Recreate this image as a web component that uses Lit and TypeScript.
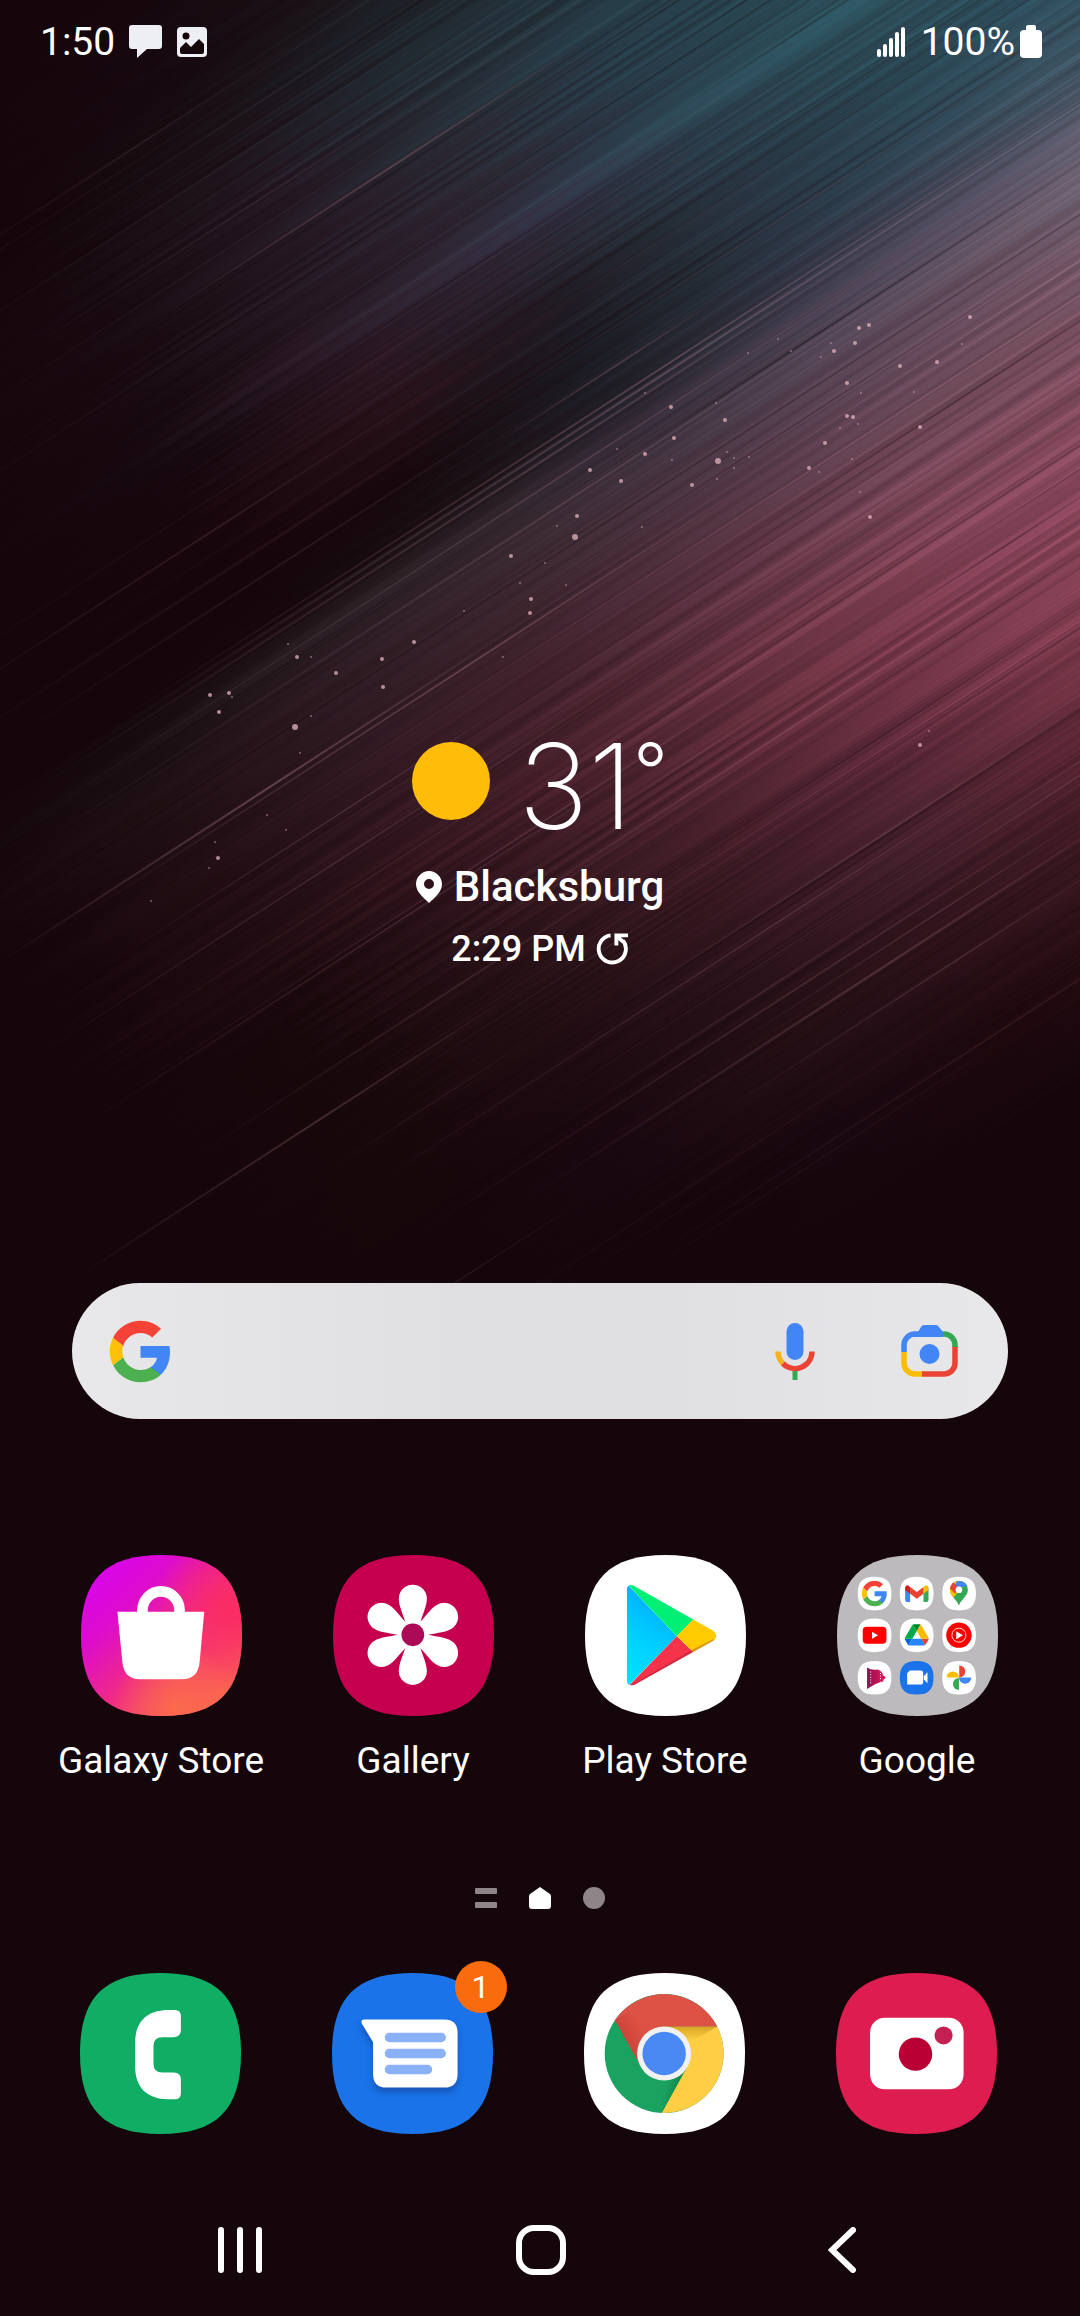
import { LitElement, html, svg, css } from "lit";
import { customElement, property } from "lit/decorators.js";

/* ---------- Wallpaper: slanted light streaks built from a colour field ---------- */

type Rgb = [number, number, number];

const NIGHT: Rgb = [21, 6, 11];
const ALONG = [-500, -300, -100, 100, 300, 500, 700, 850];
const FIELD: Array<[number, string[]]> = [
  [0, ["15060b", "15060b", "15060b", "15060b", "15060b", "15060b", "15060b", "15060b"]],
  [150, ["15060b", "15060b", "15060b", "170910", "1a1216", "1a1216", "1a1216", "1a1216"]],
  [220, ["15060b", "15060b", "15060b", "191015", "1e2329", "1e262c", "1e262c", "1e262c"]],
  [300, ["15060b", "15060b", "180a10", "251822", "26323c", "27404a", "27404a", "27404a"]],
  [400, ["15060b", "15060b", "190a11", "261822", "2c2935", "28414d", "294c57", "294c57"]],
  [480, ["15060b", "15060b", "170910", "2a1a25", "312b3c", "2c404e", "2c4e5a", "2c4e5a"]],
  [550, ["15060b", "15060b", "18070c", "2b131c", "211c24", "293844", "2c4a57", "2f5262"]],
  [620, ["15060b", "15060b", "15060b", "17080d", "1b1a21", "28333f", "304858", "3a5564"]],
  [665, ["15060b", "15060b", "15070c", "1b1014", "22222a", "363848", "484c5c", "4e5c6c"]],
  [700, ["15060b", "190d11", "281c21", "30242a", "332a36", "453f50", "585264", "656272"]],
  [750, ["16070c", "1e1014", "2c1a21", "38262e", "44343f", "564556", "675464", "706474"]],
  [850, ["15060b", "220e14", "341a24", "44242f", "5c3646", "704a5a", "7c5464", "805c70"]],
  [950, ["15060b", "1f0b11", "35161f", "4e2430", "6e3647", "83465a", "8a4c60", "8a4c60"]],
  [1020, ["15060b", "17080c", "2d131b", "4a222d", "6e3342", "844056", "904a60", "904a60"]],
  [1120, ["15060b", "17080c", "241015", "391922", "562637", "78384a", "844052", "844052"]],
  [1220, ["15060b", "16070b", "1c0a10", "2c131b", "44202c", "5c2635", "602838", "602838"]],
  [1300, ["15060b", "15060b", "190810", "240f15", "2f131b", "401a25", "401a25", "401a25"]],
  [1400, ["15060b", "15060b", "15060b", "190810", "20090f", "290e15", "290e15", "290e15"]],
  [1500, ["15060b", "15060b", "15060b", "15060b", "15060b", "17070c", "17070c", "17070c"]],
];

const rgb = (hex: string): Rgb => [
  parseInt(hex.slice(0, 2), 16),
  parseInt(hex.slice(2, 4), 16),
  parseInt(hex.slice(4, 6), 16),
];
const mix = (a: Rgb, b: Rgb, t: number): Rgb => [
  a[0] + (b[0] - a[0]) * t,
  a[1] + (b[1] - a[1]) * t,
  a[2] + (b[2] - a[2]) * t,
];
const paint = (c: Rgb) =>
  "rgb(" + c.map((n) => Math.max(0, Math.min(255, Math.round(n)))).join(",") + ")";

let seed = 20227;
const random = () => {
  seed = (seed * 1103515245 + 12345) % 2147483648;
  return seed / 2147483648;
};

function fieldRow(v: number): Rgb[] {
  let i = 0;
  while (i < FIELD.length - 2 && FIELD[i + 1][0] < v) i++;
  const [v0, a] = FIELD[i];
  const [v1, b] = FIELD[i + 1];
  const t = Math.max(0, Math.min(1, (v - v0) / (v1 - v0)));
  return a.map((hex, k) => mix(rgb(hex), rgb(b[k]), t));
}

function buildStrips() {
  const strips = [];
  let v = 60;
  let slow = 0;
  let id = 0;
  while (v < 1500) {
    const h = 1 + Math.floor(random() * random() * 6);
    slow = slow * 0.75 + (random() - 0.5) * 0.12;
    const gain = 0.96 + slow + (random() - 0.5) * 0.22;
    const shift = (random() - 0.5) * 90;
    const row = fieldRow(v + (random() - 0.5) * 16);
    const name = "strip" + id++;
    strips.push(svg`
      <linearGradient id=${name} gradientUnits="userSpaceOnUse" x1="-500" x2="850" y1="0" y2="0"
        gradientTransform=${`translate(${Math.round(shift)} 0)`}>
        ${row.map(
          (c, k) => svg`<stop offset=${(ALONG[k] + 500) / 1350} stop-color=${paint(mix(NIGHT, c, gain))}></stop>`,
        )}
      </linearGradient>
      <rect x="-1400" y=${v} width="2700" height=${h + 1} fill=${`url(#${name})`}></rect>`);
    v += h;
  }
  return strips;
}

function buildRays() {
  const rays = [];
  for (let i = 0; i < 170; i++) {
    const v = 180 + random() * 1240;
    const centre = -200 + random() * 950 - Math.max(0, v - 1000) * 0.5 + Math.max(0, 640 - v) * 0.3;
    const length = 250 + random() * 700;
    const dark = random() < 0.45;
    const strength = v < 640 ? 0.06 : 0.16;
    rays.push(svg`<rect x=${Math.round(centre - length / 2)} y=${v.toFixed(1)}
      width=${Math.round(length)} height=${(0.7 + random() * 1.6).toFixed(1)}
      fill=${dark ? "url(#rayDark)" : v < 600 ? "url(#rayCool)" : "url(#rayWarm)"}
      opacity=${(0.04 + random() * (dark ? 0.4 : strength)).toFixed(2)}></rect>`);
  }
  return rays;
}

/* Long single rays that cross most of the sky: [v, from, to, opacity] */
const LONG_RAYS: Array<[number, number, number, number]> = [
  [196, -200, 240, 0.1], [352, -60, 480, 0.24], [560, -480, 200, 0.12], [668, -300, 900, 0.26],
  [674, -260, 860, 0.22], [681, -400, 700, 0.2], [704, -450, 800, 0.18], [728, -420, 700, 0.14],
  [806, -520, 60, 0.3], [812, -420, 400, 0.26], [905, -560, 100, 0.14], [1040, -200, 640, 0.14],
  [1075, -480, 120, 0.12], [1112, -640, -100, 0.22], [1180, -100, 620, 0.18], [1196, -350, 560, 0.15],
  [1262, -300, 500, 0.12],
];

/* Dust specks: x, y, radius */
const SPECKS: Array<[number, number, number]> = [
  [970, 317, 2], [962, 344, 1], [937, 362, 2], [900, 366, 2], [914, 392, 1], [920, 427, 2], [847, 383, 2],
  [861, 393, 1], [869, 325, 2], [859, 328, 2], [855, 343, 2], [834, 351, 2], [831, 343, 1], [821, 357, 1],
  [853, 417, 2], [847, 416, 2], [858, 424, 1], [840, 428, 1], [825, 443, 2], [852, 459, 1], [809, 468, 2],
  [819, 472, 1], [860, 492, 1], [870, 517, 2], [791, 351, 1], [778, 339, 1], [748, 353, 1], [725, 420, 2],
  [716, 403, 1], [671, 407, 2], [645, 393, 1], [674, 438, 2], [645, 454, 2], [617, 449, 1], [590, 470, 2],
  [621, 481, 2], [718, 461, 3], [727, 452, 1], [734, 458, 1], [734, 468, 1], [749, 457, 1], [717, 479, 1],
  [692, 485, 2], [672, 460, 1], [577, 516, 2], [575, 537, 3], [557, 526, 1], [642, 527, 1], [511, 556, 2],
  [545, 563, 1], [520, 583, 1], [531, 599, 2], [530, 613, 2], [566, 585, 1], [464, 611, 1], [503, 657, 1],
  [414, 642, 2], [382, 659, 2], [383, 687, 2], [336, 673, 2], [297, 657, 2], [288, 644, 1], [311, 657, 1],
  [210, 695, 2], [219, 712, 2], [229, 693, 2], [232, 697, 1], [295, 727, 3], [311, 716, 1], [300, 753, 1],
  [267, 815, 1], [215, 842, 1], [218, 858, 2], [209, 868, 1], [286, 830, 1], [151, 901, 1], [929, 731, 1],
  [920, 745, 2],
];

const STRIPS = buildStrips();
const RAYS = buildRays();

@customElement("home-wallpaper")
export class HomeWallpaper extends LitElement {
  static styles = css`
    :host { display: block; }
    .sky { display: block; width: 100%; height: 100%; }
  `;
  render() {
    const ray = (id: string, colour: string) => svg`
      <linearGradient id=${id}>
        <stop offset="0" stop-color=${colour} stop-opacity="0"></stop>
        <stop offset="0.55" stop-color=${colour}></stop>
        <stop offset="1" stop-color=${colour} stop-opacity="0"></stop>
      </linearGradient>`;
    return html`
      <svg class="sky" viewBox="0 0 1080 2316" preserveAspectRatio="xMidYMin slice" aria-hidden="true">
        <defs>${ray("rayWarm", "#e0a0b0")}${ray("rayCool", "#b0a0b0")}${ray("rayDark", "#15060b")}</defs>
        <rect width="1080" height="2316" fill="#15060b"></rect>
        <g transform="rotate(-33)">
          ${STRIPS} ${RAYS}
          ${LONG_RAYS.map(
            ([v, from, to, o]) => svg`<rect x=${from} y=${v} width=${to - from} height="2"
              fill="url(#rayWarm)" opacity=${o}></rect>`,
          )}
        </g>
        <g fill="#e6b4be">
          ${SPECKS.map(
            ([x, y, r]) => svg`<circle cx=${x} cy=${y} r=${r} opacity=${r > 1 ? 0.75 : 0.5}></circle>`,
          )}
        </g>
      </svg>`;
  }
}

/* ---------- Icon artwork ---------- */

const TILE = "M241 0C409 0 482 73 482 241S409 482 241 482S0 409 0 241S73 0 241 0Z";

const googleG = svg`
  <path fill="#4285f4" d="M22.56 12.25c0-.78-.07-1.53-.2-2.25H12v4.26h5.92c-.26 1.37-1.04 2.53-2.21 3.31v2.77h3.57c2.08-1.92 3.28-4.74 3.28-8.09z"></path>
  <path fill="#4caf50" d="M12 23c2.97 0 5.46-.98 7.28-2.66l-3.57-2.77c-.98.66-2.23 1.06-3.71 1.06-2.86 0-5.29-1.93-6.16-4.53L2.18 16.93C3.99 20.53 7.7 23 12 23z"></path>
  <path fill="#ffc107" d="M5.84 14.09c-.22-.66-.35-1.36-.35-2.09s.13-1.43.35-2.09L2.18 7.07C1.43 8.55 1 10.22 1 12s.43 3.45 1.18 4.93z"></path>
  <path fill="#f44336" d="M12 5.38c1.62 0 3.06.56 4.21 1.64l3.15-3.15C17.45 2.09 14.97 1 12 1 7.7 1 3.99 3.47 2.18 7.07l3.66 2.84c.87-2.6 3.3-4.53 6.16-4.53z"></path>`;

const galaxyStore = svg`
  <defs>
    <linearGradient id="storeBg" x1="0.08" y1="0.2" x2="0.8" y2="0.95">
      <stop offset="0" stop-color="#da06e6"></stop><stop offset="0.22" stop-color="#dd0ccc"></stop>
      <stop offset="0.55" stop-color="#f02a86"></stop><stop offset="1" stop-color="#fb6450"></stop>
    </linearGradient>
    <radialGradient id="storeGlow" cx="0.95" cy="0.35" r="0.5">
      <stop offset="0" stop-color="#fb2c62"></stop><stop offset="1" stop-color="#fb2c62" stop-opacity="0"></stop>
    </radialGradient>
    <radialGradient id="storeWarm" cx="0.6" cy="0.95" r="0.4">
      <stop offset="0" stop-color="#fb6a4c"></stop><stop offset="1" stop-color="#fb6a4c" stop-opacity="0"></stop>
    </radialGradient>
  </defs>
  <path d=${TILE} fill="url(#storeBg)"></path><path d=${TILE} fill="url(#storeGlow)"></path>
  <path d=${TILE} fill="url(#storeWarm)"></path>
  <path d="M184 176V165a55.500 56 0 0 1 111 0V176" fill="none" stroke="#fff" stroke-width="32"></path>
  <path d="M109 170H369L355 322Q350 372 302 372H177Q129 372 124 322Z" fill="#fff"></path>`;

const gallery = svg`
  <path d=${TILE} fill="#c4004f"></path>
  <g fill="#fff">
    ${[0, 60, 120, 180, 240, 300].map(
      (a) => svg`<path transform=${`rotate(${a} 239 239)`}
        d="M216 199C206 168 197 150 197 131A42 42 0 0 1 281 131C281 150 272 168 262 199L239 239Z"></path>`,
    )}
    <circle cx="239" cy="239" r="47"></circle>
  </g>
  <circle cx="239" cy="239" r="34" fill="#aa0a56"></circle>`;

const playStore = svg`
  <defs>
    <linearGradient id="playBlue" x1="0.6" y1="0" x2="0.3" y2="1">
      <stop offset="0" stop-color="#00a6ff"></stop><stop offset="0.6" stop-color="#00d2ff"></stop>
      <stop offset="1" stop-color="#00e2ff"></stop>
    </linearGradient>
    <clipPath id="playClip"><path d="M125 104Q127 85 146 92L384 227Q403 242 384 257L147 389Q127 395 125 376Z"></path></clipPath>
  </defs>
  <path d=${TILE} fill="#fff"></path>
  <g clip-path="url(#playClip)">
    <path d="M110 70L275 243L110 412Z" fill="url(#playBlue)"></path>
    <path d="M126 86L150 70L340 177L275 243Z" fill="#00f076"></path>
    <path d="M126 397L150 420L340 305L275 243Z" fill="#f6334b"></path>
    <path d="M275 243L323 194L350 150L430 243L350 330L322 288Z" fill="#ffcb00"></path>
    <path d="M130 398L147 384L322 283L384 252L400 258L147 402Z" fill="#7a1a30" opacity="0.3"></path>
  </g>`;

const tile = (x: number, y: number, fill: string, art: unknown) => svg`
  <g transform=${`translate(${x} ${y})`}>
    <path transform="scale(0.2095)" d=${TILE} fill=${fill}></path>${art}
  </g>`;

const googleFolder = svg`
  <defs><clipPath id="pinClip"><path d="M50 87C46 70 23 58 23 39A27 27 0 0 1 77 39C77 58 54 70 50 87Z"></path></clipPath>
    <linearGradient id="filmBg"><stop offset="0" stop-color="#8c1450"></stop><stop offset="1" stop-color="#e8125c"></stop></linearGradient>
  </defs>
  <path d=${TILE} fill="#bcbabc"></path>
  ${tile(62, 65, "#fff", svg`<g transform="translate(9 9) scale(3.45)">${googleG}</g>`)}
  ${tile(188, 65, "#fff", svg`
    <path d="M16 34H31V76H22Q16 76 16 70Z" fill="#4285f4"></path>
    <path d="M71 34H86V70Q86 76 80 76H71Z" fill="#34a853"></path>
    <path d="M31 31L51 46L71 31V51L51 66L31 51Z" fill="#ea4335"></path>
    <path d="M16 35Q16 25 25 26L31 31V51L16 40Z" fill="#c5221f"></path>
    <path d="M86 35Q86 25 77 26L71 31V51L86 40Z" fill="#fbbc04"></path>`)}
  ${tile(315, 65, "#fff", svg`
    <g clip-path="url(#pinClip)">
      <path d="M0 0H100V100H0Z" fill="#34a853"></path>
      <path d="M10 50L30 66L64 26L100 0H50Z" fill="#fbbc04"></path>
      <path d="M55 0H90V24L62 30L50 39L36 26Z" fill="#4285f4"></path>
      <path d="M10 0H30L36 20L50 35L38 50L20 32Z" fill="#ea4335"></path>
    </g>
    <circle cx="50" cy="39" r="10" fill="#fff"></circle>`)}
  ${tile(62, 190, "#fff", svg`
    <rect x="15" y="25" width="71" height="51" rx="12" fill="#f00"></rect>
    <path d="M43 40L61 50L43 61Z" fill="#fff"></path>`)}
  ${tile(188, 190, "#fff", svg`<g transform="translate(15 17) scale(0.82)">
    <path fill="#0066da" d="m6.600 66.850 3.850 6.650c.8 1.400 1.950 2.500 3.300 3.300l13.750-23.800h-27.500c0 1.550.4 3.100 1.200 4.500z"></path>
    <path fill="#00ac47" d="m43.650 25-13.750-23.800c-1.350.8-2.500 1.900-3.300 3.300l-25.400 44a9.060 9.060 0 0 0 -1.200 4.500h27.500z"></path>
    <path fill="#ea4335" d="m73.550 76.800c1.350-.8 2.500-1.900 3.300-3.300l1.600-2.750 7.650-13.250c.8-1.400 1.200-2.950 1.200-4.500h-27.500l5.850 11.500z"></path>
    <path fill="#00832d" d="m43.650 25 13.750-23.800c-1.350-.8-2.900-1.200-4.500-1.200h-18.500c-1.600 0-3.150.45-4.500 1.200z"></path>
    <path fill="#2684fc" d="m59.800 53h-32.300l-13.750 23.800c1.350.8 2.900 1.200 4.500 1.200h50.800c1.600 0 3.150-.45 4.500-1.200z"></path>
    <path fill="#ffba00" d="m73.400 26.500-12.700-22c-.8-1.400-1.950-2.500-3.300-3.300l-13.750 23.800 16.150 28h27.450c0-1.550-.4-3.100-1.200-4.500z"></path></g>`)}
  ${tile(315, 190, "#fff", svg`
    <circle cx="50" cy="50" r="38" fill="#f00"></circle>
    <circle cx="50" cy="50" r="21" fill="none" stroke="#fff" stroke-width="2.500"></circle>
    <path d="M42 38L62 50L42 62Z" fill="#fff"></path>`)}
  ${tile(62, 317, "#fff", svg`
    <path d="M28 20Q42 29 60 26Q74 30 76 44Q86 48 82 53Q76 54 76 62Q62 66 52 70L28 84Z" fill="url(#filmBg)"></path>
    <path d="M39 32V72M68 36V62" stroke="#fff" stroke-width="3" stroke-dasharray="3 5"></path>`)}
  ${tile(188, 317, "#1a73e8", svg`
    <path d="M22 71V37L30 29H62Q70 29 70 37V63Q70 71 62 71Z" fill="#fff"></path>
    <path d="M72 46L83 34V67L72 56Z" fill="#fff"></path>`)}
  ${tile(315, 317, "#fff", svg`
    <path d="M51 14a18 18 0 0 1 0 36z" fill="#ea4335"></path>
    <path d="M50 50h37a18.500 18.500 0 0 1-37 0z" fill="#4285f4"></path>
    <path d="M50 87a18 18 0 0 1 0-36z" fill="#34a853"></path>
    <path d="M13 50a18.500 18.500 0 0 1 37 0z" fill="#fbbc04"></path>`)}`;

const phone = svg`
  <path d=${TILE} fill="#0fae64"></path>
  <path fill="#fff" d="M265 111H284Q302 111 302 129V170Q302 192 280 192H246Q220 192 220 218V272Q220 298 246 298H280Q302 298 302 320V360Q302 378 284 378H265C200 378 165 342 165 280V209C165 147 200 111 265 111Z"></path>`;

const messages = svg`
  <defs><filter id="bubbleShadow" x="-20%" y="-20%" width="140%" height="150%"><feGaussianBlur stdDeviation="10"></feGaussianBlur></filter></defs>
  <path d=${TILE} fill="#1a73e8"></path>
  <path transform="translate(0 14)" filter="url(#bubbleShadow)" opacity="0.6" fill="#123f94" d="M97 139H336Q376 139 376 179V303Q376 343 336 343H163Q123 343 123 303V207L90 153Q84 139 97 139Z"></path>
  <path fill="#fff" d="M97 139H336Q376 139 376 179V303Q376 343 336 343H163Q123 343 123 303V207L90 153Q84 139 97 139Z"></path>
  <g fill="#8ab0f8">
    <rect x="158" y="179" width="183" height="28" rx="14"></rect>
    <rect x="158" y="227" width="183" height="28" rx="14"></rect>
    <rect x="158" y="275" width="142" height="28" rx="14"></rect>
  </g>`;

const chrome = svg`
  <defs>
    <linearGradient id="shadeYellow" x1="0" y1="0" x2="0" y2="1">
      <stop offset="0" stop-color="#c79018" stop-opacity="0.7"></stop><stop offset="1" stop-color="#e0a828" stop-opacity="0"></stop>
    </linearGradient>
    <linearGradient id="shadeGreen" x1="1" y1="0.3" x2="0.3" y2="0">
      <stop offset="0" stop-color="#0a6a3a" stop-opacity="0.7"></stop><stop offset="1" stop-color="#0a6a3a" stop-opacity="0"></stop>
    </linearGradient>
    <linearGradient id="shadeRed" x1="0" y1="0.8" x2="0.7" y2="0.3">
      <stop offset="0" stop-color="#a8281e" stop-opacity="0.6"></stop><stop offset="1" stop-color="#a8281e" stop-opacity="0"></stop>
    </linearGradient>
  </defs>
  <path d=${TILE} fill="#fff"></path>
  <circle cx="240" cy="241" r="178" fill="#1aa260"></circle>
  <path d="M93 141A178 178 0 0 1 399 161H240A80 80 0 0 0 171 281Z" fill="#de5145"></path>
  <path d="M93 141L130 120L210 170A80 80 0 0 0 171 281Z" fill="url(#shadeRed)"></path>
  <path d="M240 161H399A178 178 0 0 1 233 419L309 281A80 80 0 0 0 240 161Z" fill="#ffce44"></path>
  <path d="M240 161H399L318 206Z" fill="url(#shadeYellow)"></path>
  <path d="M233 419L309 281L240 300Z" fill="url(#shadeGreen)"></path>
  <circle cx="240" cy="241" r="81" fill="#f1f1f1"></circle>
  <circle cx="240" cy="241" r="65" fill="#4a88f4"></circle>`;

const camera = svg`
  <path d=${TILE} fill="#dd1c50"></path>
  <rect x="102" y="134" width="280" height="214" rx="44" fill="#fff"></rect>
  <circle cx="238" cy="243" r="50" fill="#b90034"></circle>
  <circle cx="322" cy="187" r="27" fill="#c42052"></circle>`;

/* ---------- App shortcut ---------- */

@customElement("app-shortcut")
export class AppShortcut extends LitElement {
  @property() name = "";
  @property({ type: Boolean }) labelled = false;
  @property({ type: Number }) badge = 0;
  @property({ attribute: false }) art: unknown = null;

  static styles = css`
    :host { display: block; }
    .shortcut {
      display: flex; flex-direction: column; align-items: center; gap: 23px;
      width: 100%; padding: 0; border: 0; background: none; cursor: pointer;
      font-family: Roboto, "Liberation Sans", sans-serif; font-size: 37px; line-height: 44px;
      color: #fff; white-space: nowrap;
    }
    .tile { position: relative; display: block; width: 161px; height: 161px; }
    .picture { display: block; width: 100%; height: 100%; }
    .badge {
      position: absolute; top: -12px; right: -14px; width: 52px; height: 52px; border-radius: 50%;
      background: #f96b0c; font-size: 32px; line-height: 52px; text-align: center;
    }
  `;
  render() {
    return html`
      <button class="shortcut" type="button" aria-label=${this.name}>
        <span class="tile">
          <svg class="picture" viewBox="0 0 482 482" aria-hidden="true">${this.art}</svg>
          ${this.badge ? html`<span class="badge">${this.badge}</span>` : null}
        </span>
        ${this.labelled ? html`<span>${this.name}</span>` : null}
      </button>`;
  }
}

/* ---------- Home screen ---------- */

const APPS = [
  { name: "Galaxy Store", art: galaxyStore },
  { name: "Gallery", art: gallery },
  { name: "Play Store", art: playStore },
  { name: "Google", art: googleFolder },
];
const DOCK = [
  { name: "Phone", art: phone, badge: 0 },
  { name: "Messages", art: messages, badge: 1 },
  { name: "Chrome", art: chrome, badge: 0 },
  { name: "Camera", art: camera, badge: 0 },
];

@customElement("app-root")
export class AppRoot extends LitElement {
  static styles = css`
    :host {
      display: block; color: #fff; background: #15060b;
      font-family: Roboto, "Liberation Sans", sans-serif;
    }
    button { padding: 0; border: 0; background: none; color: inherit; font: inherit; cursor: pointer; }
    svg { display: block; flex: none; }
    .screen {
      position: relative; display: flex; flex-direction: column;
      min-height: 100vh; box-sizing: border-box; overflow: hidden;
    }
    .wallpaper { position: absolute; inset: 0; }
    .status, .weather, .search, .apps, .pages, .dock, .keys { position: relative; }
    .status {
      display: flex; justify-content: space-between; align-items: center;
      height: 84px; padding: 0 38px 0 40px; font-size: 39px; line-height: 48px;
    }
    .group { display: flex; align-items: center; gap: 14px; }
    .signal { gap: 16px; }
    .charge { display: flex; align-items: center; gap: 5px; }
    .weather {
      display: flex; flex-direction: column; align-items: center; gap: 18px; margin-top: 643px;
    }
    .now { display: flex; align-items: center; gap: 28px; }
    .sun { width: 78px; height: 78px; margin-bottom: 10px; border-radius: 50%; background: #ffbd0a; }
    .degrees {
      display: flex; align-items: flex-start;
      font-family: Inter, Roboto, "Liberation Sans", sans-serif;
      font-size: 118px; line-height: 118px; font-weight: 200;
    }
    .unit { font-size: 76px; line-height: 86px; font-weight: 300; }
    .place { display: flex; align-items: center; gap: 12px; font-size: 42px; line-height: 48px; font-weight: 500; }
    .updated { display: flex; align-items: center; gap: 10px; font-size: 36px; line-height: 40px; font-weight: 500; }
    .search {
      display: flex; align-items: center; height: 136px; margin: 314px 72px 0; padding: 0 50px 0 35px;
      border-radius: 68px; background: linear-gradient(90deg, #e8e8ea, #e0e0e2 40%, #e0e0e2 65%, #e8e8ea);
    }
    .query {
      flex: 1; min-width: 0; height: 100%; padding: 0 24px; border: 0; outline: 0; background: none;
      font: inherit; font-size: 37px; color: #202124;
    }
    .tools { display: flex; align-items: center; gap: 86px; }
    .apps, .dock { display: grid; grid-template-columns: repeat(4, 1fr); }
    .apps { margin-top: 136px; padding: 0 37px 0 35px; }
    .pages { display: flex; justify-content: center; gap: 32px; margin-top: 104px; }
    .dock { margin-top: 64px; padding: 0 38px 0 34px; }
    .keys {
      display: grid; grid-template-columns: repeat(3, 1fr); align-items: center;
      margin-top: 62px; padding: 0 87px 0 89px; height: 108px;
    }
    .key { display: flex; justify-content: center; align-items: center; height: 108px; }
  `;

  render() {
    return html`
      <main class="screen">
        <home-wallpaper class="wallpaper"></home-wallpaper>

        <header class="status">
          <div class="group">
            <time>1:50</time>
            <div class="group">
              <svg width="34" height="34" viewBox="0 0 34 34" aria-hidden="true">
                <path fill="#eeeff4" d="M3 0H30Q33 0 33 3V21Q33 24 30 24H18L8 33V24H3Q0 24 0 21V3Q0 0 3 0Z"></path>
              </svg>
              <svg width="30" height="30" viewBox="0 0 30 30" aria-hidden="true">
                <rect width="30" height="30" rx="4" fill="#eeeff4"></rect>
                <circle cx="9" cy="9" r="3.500" fill="#15060b"></circle>
                <path fill="#15060b" d="M3 21L9 15L14 20L22 12L27 17V25Q27 27 25 27H5Q3 27 3 25Z"></path>
              </svg>
            </div>
          </div>
          <div class="group signal">
            <svg width="28" height="30" viewBox="0 0 28 30" fill="#fff" aria-hidden="true">
              <rect x="0" y="22" width="4" height="8" rx="2"></rect>
              <rect x="6" y="17" width="4" height="13" rx="2"></rect>
              <rect x="12" y="11" width="4" height="19" rx="2"></rect>
              <rect x="18" y="5" width="4" height="25" rx="2"></rect>
              <rect x="24" y="0" width="4" height="30" rx="2"></rect>
            </svg>
            <div class="charge">
              <span>100%</span>
              <svg width="22" height="34" viewBox="0 0 22 34" fill="#fff" aria-hidden="true">
                <rect x="6" y="0" width="10" height="8" rx="2"></rect>
                <rect x="0" y="5" width="22" height="28" rx="4"></rect>
              </svg>
            </div>
          </div>
        </header>

        <section class="weather" aria-label="Weather">
          <div class="now">
            <div class="sun"></div>
            <div class="degrees"><span>31</span><span class="unit">°</span></div>
          </div>
          <div class="place">
            <svg width="26" height="32" viewBox="0 0 26 32" aria-hidden="true">
              <path fill="#fff" fill-rule="evenodd" d="M13 0C20 0 26 6 26 13C26 21 19 26 13 32C7 26 0 21 0 13C0 6 6 0 13 0ZM13 8A5 5 0 1 0 13 18A5 5 0 1 0 13 8Z"></path>
            </svg>
            <span>Blacksburg</span>
          </div>
          <div class="updated">
            <span>2:29 PM</span>
            <button type="button" aria-label="Refresh weather">
              <svg width="33" height="33" viewBox="0 0 34 34" fill="none" stroke="#fff" stroke-width="4" aria-hidden="true">
                <path d="M15 2.500A14 14 0 1 0 28 8"></path>
                <path d="M33 2.500H21V13M22 4L28 9"></path>
              </svg>
            </button>
          </div>
        </section>

        <form class="search" role="search" @submit=${(e: Event) => e.preventDefault()}>
          <svg width="67" height="67" viewBox="0 0 24 24" aria-hidden="true">${googleG}</svg>
          <input class="query" type="text" aria-label="Search Google" />
          <div class="tools">
            <button type="button" aria-label="Voice search">
              <svg width="40" height="57" viewBox="0 0 40 57" fill="none" aria-hidden="true">
                <rect x="11.500" y="0" width="17" height="37" rx="8.500" fill="#4285f4"></rect>
                <rect x="17.500" y="46" width="5" height="11" fill="#34a853"></rect>
                <path d="M3 28.500A17 17 0 0 0 8 40.500" stroke="#f6b21a" stroke-width="5.500"></path>
                <path d="M8 40.500A17 17 0 0 0 37 28.500" stroke="#ea4335" stroke-width="5.500"></path>
              </svg>
            </button>
            <button type="button" aria-label="Search with camera">
              <svg width="57" height="52" viewBox="0 0 57 52" fill="none" stroke-width="5.500" aria-hidden="true">
                <path d="M3 27V38A11 11 0 0 0 14 49H23" stroke="#fbbc04"></path>
                <path d="M54 21V38A11 11 0 0 1 43 49H21" stroke="#ea4335"></path>
                <path d="M40 9H43A11 11 0 0 1 54 20V22" stroke="#34a853"></path>
                <path d="M3 27V20A11 11 0 0 1 14 9H41" stroke="#4285f4"></path>
                <path d="M23 0H35Q37 0 38 2L42 7V12H12V7H17L20 2Q21 0 23 0Z" fill="#4285f4"></path>
                <circle cx="28.500" cy="29" r="10" fill="#4285f4"></circle>
              </svg>
            </button>
          </div>
        </form>

        <section class="apps" aria-label="Apps">
          ${APPS.map((a) => html`<app-shortcut labelled .name=${a.name} .art=${a.art}></app-shortcut>`)}
        </section>

        <nav class="pages" aria-label="Pages">
          <button type="button" aria-label="Feed">
            <svg width="22" height="22" viewBox="0 0 22 22" fill="#8f8488" aria-hidden="true">
              <rect y="1" width="22" height="6" rx="1"></rect><rect y="15" width="22" height="6" rx="1"></rect>
            </svg>
          </button>
          <button type="button" aria-label="Home page" aria-current="page">
            <svg width="22" height="22" viewBox="0 0 22 22" aria-hidden="true">
              <path fill="#fff" d="M11 0L21 7Q22 8 22 9V19Q22 22 19 22H3Q0 22 0 19V9Q0 8 1 7Z"></path>
            </svg>
          </button>
          <button type="button" aria-label="Page 2">
            <svg width="22" height="22" viewBox="0 0 22 22" aria-hidden="true">
              <circle cx="11" cy="11" r="11" fill="#8f8488"></circle>
            </svg>
          </button>
        </nav>

        <section class="dock" aria-label="Dock">
          ${DOCK.map((a) => html`<app-shortcut .name=${a.name} .art=${a.art} .badge=${a.badge}></app-shortcut>`)}
        </section>

        <nav class="keys" aria-label="System">
          <button class="key" type="button" aria-label="Recents">
            <svg width="44" height="46" viewBox="0 0 44 46" fill="#fff" aria-hidden="true">
              <rect x="0" width="6" height="46" rx="3"></rect><rect x="19" width="6" height="46" rx="3"></rect>
              <rect x="38" width="6" height="46" rx="3"></rect>
            </svg>
          </button>
          <button class="key" type="button" aria-label="Home">
            <svg width="50" height="50" viewBox="0 0 50 50" aria-hidden="true">
              <rect x="3" y="3" width="44" height="44" rx="15" fill="none" stroke="#fff" stroke-width="6"></rect>
            </svg>
          </button>
          <button class="key" type="button" aria-label="Back">
            <svg width="28" height="46" viewBox="0 0 28 46" aria-hidden="true">
              <path d="M25 3L4 23L25 43" fill="none" stroke="#fff" stroke-width="6" stroke-linecap="round"></path>
            </svg>
          </button>
        </nav>
      </main>`;
  }
}
